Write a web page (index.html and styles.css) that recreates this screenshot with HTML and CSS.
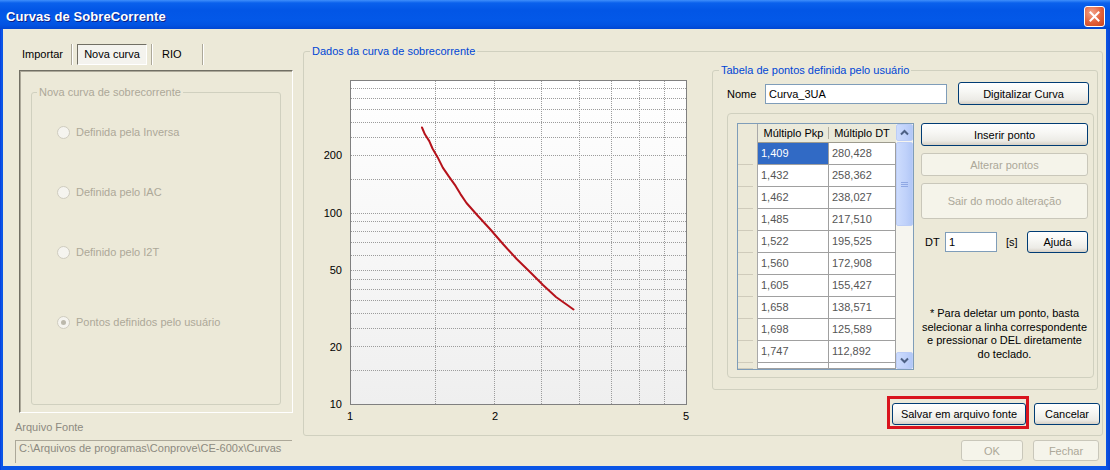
FILE: index.html
```html
<!DOCTYPE html>
<html lang="pt">
<head>
<meta charset="utf-8">
<title>Curvas de SobreCorrente</title>
<link rel="stylesheet" href="styles.css">
</head>
<body>
<div class="window">
  <div class="titlebar">
    <span class="title">Curvas de SobreCorrente</span>
    <span class="close-btn"><svg width="13" height="13" viewBox="0 0 13 13"><path d="M2.5 2.5L10.5 10.5M10.5 2.5L2.5 10.5" stroke="#fff" stroke-width="2" stroke-linecap="square"/></svg></span>
  </div>
  <div class="client">
    <div class="leftcol">
      <div class="tabs">
        <span class="tab t1">Importar</span><span class="tsep"></span>
        <span class="tab t2"><span class="tsel">Nova curva</span></span><span class="tsep"></span>
        <span class="tab t3">RIO</span><span class="tsep"></span>
      </div>
      <div class="tabpanel">
        <fieldset class="grp grp-dis">
          <legend>Nova curva de sobrecorrente</legend>
          <div class="radio r1"><span class="rc"></span>Definida pela Inversa</div>
          <div class="radio r2"><span class="rc"></span>Definida pelo IAC</div>
          <div class="radio r3"><span class="rc"></span>Definido pelo I2T</div>
          <div class="radio r4"><span class="rc on"></span>Pontos definidos pelo usuário</div>
        </fieldset>
      </div>
      <div class="arq-label">Arquivo Fonte</div>
      <div class="arq-path">C:\Arquivos de programas\Conprove\CE-600x\Curvas</div>
    </div>
    <div class="rightcol">
      <fieldset class="grp grp-main">
        <legend>Dados da curva de sobrecorrente</legend>
        <div class="main-inner">
          <svg class="chart" viewBox="310 70 385 355" width="385" height="355">
            <defs>
              <linearGradient id="plotbg" x1="0" y1="0" x2="0" y2="1">
                <stop offset="0" stop-color="#ffffff"/>
                <stop offset="1" stop-color="#efefef"/>
              </linearGradient>
            </defs>
            <rect x="350.5" y="80.5" width="336" height="324" fill="url(#plotbg)"/>
            <g stroke="#9c9c9c" stroke-width="1" stroke-dasharray="1 1" fill="none">
              <path d="M351 88.5H686M351 98.5H686M351 109.5H686M351 122.5H686M351 137.5H686M351 155.5H686M351 179.5H686M351 213.5H686M351 221.5H686M351 231.5H686M351 242.5H686M351 255.5H686M351 270.5H686M351 279.5H686M351 289.5H686M351 300.5H686M351 313.5H686M351 328.5H686M351 346.5H686M351 370.5H686"/>
              <path d="M435.5 81V404M494.5 81V404M541.5 81V404M579.5 81V404M611.5 81V404M639.5 81V404M664.5 81V404"/>
            </g>
            <rect x="350.5" y="80.5" width="336" height="324" fill="none" stroke="#808080"/>
            <polyline fill="none" stroke="#b5121b" stroke-width="2" stroke-linejoin="round" stroke-linecap="round"
              points="422,127.5 424.9,134.3 429.3,141.1 432.5,148.5 437.7,157.4 442.8,167.6 448.8,176.4 455.6,185.9 460.5,194.1 466.5,203 478,216 490,229 503,244 516.7,259 530,272 543,285 556,297 563,302 568,305.5 573.5,309.5"/>
            <g class="axis" text-anchor="end">
              <text x="342" y="159">200</text>
              <text x="342" y="217">100</text>
              <text x="342" y="274">50</text>
              <text x="342" y="351">20</text>
              <text x="342" y="408">10</text>
            </g>
            <g class="axis" text-anchor="middle">
              <text x="350" y="420">1</text>
              <text x="495" y="420">2</text>
              <text x="686" y="420">5</text>
            </g>
          </svg>
          <div class="tablecol">
            <fieldset class="grp grp-table">
              <legend>Tabela de pontos definida pelo usuário</legend>
              <div class="nome-row">
                <span class="nome-lbl">Nome</span>
                <span class="input nome-in">Curva_3UA</span>
                <span class="btn digit-btn">Digitalizar Curva</span>
              </div>
              <div class="inner-panel">
                <div class="grid">
                  <div class="gdata">
                    <div class="grow ghead"><span class="rh"></span><span class="c1">Múltiplo Pkp</span><span class="c2">Múltiplo DT</span></div>
                    <div class="grow"><span class="rh"></span><span class="c1 sel">1,409</span><span class="c2">280,428</span></div>
                    <div class="grow"><span class="rh"></span><span class="c1">1,432</span><span class="c2">258,362</span></div>
                    <div class="grow"><span class="rh"></span><span class="c1">1,462</span><span class="c2">238,027</span></div>
                    <div class="grow"><span class="rh"></span><span class="c1">1,485</span><span class="c2">217,510</span></div>
                    <div class="grow"><span class="rh"></span><span class="c1">1,522</span><span class="c2">195,525</span></div>
                    <div class="grow"><span class="rh"></span><span class="c1">1,560</span><span class="c2">172,908</span></div>
                    <div class="grow"><span class="rh"></span><span class="c1">1,605</span><span class="c2">155,427</span></div>
                    <div class="grow"><span class="rh"></span><span class="c1">1,658</span><span class="c2">138,571</span></div>
                    <div class="grow"><span class="rh"></span><span class="c1">1,698</span><span class="c2">125,589</span></div>
                    <div class="grow"><span class="rh"></span><span class="c1">1,747</span><span class="c2">112,892</span></div>
                    <div class="grow part"><span class="rh"></span><span class="c1"></span><span class="c2"></span></div>
                  </div>
                  <div class="vscroll">
                    <span class="sb-btn"><svg width="9" height="7" viewBox="0 0 9 7"><path d="M1 5.5L4.5 2L8 5.5" fill="none" stroke="#4d6185" stroke-width="2"/></svg></span>
                    <span class="sb-thumb"><svg width="7" height="7" viewBox="0 0 7 7"><path d="M0 1.5H7M0 3.5H7M0 5.5H7" stroke="#8fa8e4" stroke-width="1"/></svg></span>
                    <span class="sb-fill"></span>
                    <span class="sb-btn"><svg width="9" height="7" viewBox="0 0 9 7"><path d="M1 1.5L4.5 5L8 1.5" fill="none" stroke="#4d6185" stroke-width="2"/></svg></span>
                  </div>
                </div>
                <div class="btncol">
                  <span class="btn b-ins">Inserir ponto</span>
                  <span class="btn dis b-alt">Alterar pontos</span>
                  <span class="btn dis b-sair">Sair do modo alteração</span>
                  <div class="dt-row">
                    <span class="dt-lbl">DT</span>
                    <span class="input dt-in">1</span>
                    <span class="dt-unit">[s]</span>
                    <span class="btn b-ajuda">Ajuda</span>
                  </div>
                  <div class="note">* Para deletar um ponto, basta<br>selecionar a linha correspondente<br>e pressionar o DEL diretamente<br>do teclado.</div>
                </div>
              </div>
            </fieldset>
            <div class="save-row">
              <span class="redbox"><span class="btn b-salvar">Salvar em arquivo fonte</span></span>
              <span class="btn b-cancel">Cancelar</span>
            </div>
          </div>
        </div>
      </fieldset>
      <div class="bottom-row">
        <span class="btn dis b-ok">OK</span>
        <span class="btn dis b-fechar">Fechar</span>
      </div>
    </div>
  </div>
</div>
</body>
</html>
```
FILE: styles.css
```css
* { box-sizing: border-box; }
body {
  margin: 0;
  background: #ffffff;
  font-family: "Liberation Sans", Arial, sans-serif;
  font-size: 11px;
  color: #000;
}
.window {
  width: 1110px;
  height: 470px;
  background: linear-gradient(90deg, #0831d9 0, #0a55e6 1px, #0a55e6 1106px, #0843d2 1110px);
  display: flex;
  flex-direction: column;
  overflow: hidden;
}
.titlebar {
  height: 29px;
  flex: none;
  display: flex;
  align-items: center;
  padding: 0 5px 0 6px;
  background: linear-gradient(#3f8ffb 0, #0a61ec 3px, #0256e6 10px, #0358e8 20px, #0253e2 25px, #0146d2 29px);
}
.title {
  flex: 1;
  color: #fff;
  font-weight: bold;
  font-size: 13px;
  padding-top: 3px;
  text-shadow: 1px 1px 0 #0c1f86;
  letter-spacing: 0.1px;
}
.close-btn {
  width: 21px;
  height: 21px;
  margin-top: 3px;
  border: 1px solid #fff;
  border-radius: 3px;
  background: radial-gradient(circle at 35% 30%, #f3a48a 0, #e2603a 55%, #c9431d 100%);
  display: flex;
  align-items: center;
  justify-content: center;
}
.client {
  flex: 1;
  margin: 0 4px 4px 3px;
  background: #ece9d8;
  display: flex;
  padding-left: 11px;
}

/* left column */
.leftcol { width: 278px; flex: none; display: flex; flex-direction: column; }
.tabs { margin-top: 14px; height: 22px; display: flex; align-items: center; }
.tab { height: 21px; line-height: 21px; }
.t1 { width: 57px; text-align: center; }
.t2 { width: 78px; padding: 0 4px; }
.tsel {
  display: block;
  height: 21px;
  line-height: 19px;
  text-align: center;
  background: #f4f3ee;
  border-top: 1px solid #716f64;
  border-left: 1px solid #716f64;
  border-right: 1px solid #ffffff;
  border-bottom: 1px solid #ffffff;
}
.t3 { width: 49px; padding-left: 9px; }
.tsep { width: 2px; height: 21px; border-left: 1px solid #aca899; border-right: 1px solid #ffffff; }
.tabpanel {
  margin-top: 5px;
  margin-left: 5px;
  width: 274px;
  height: 343px;
  border-top: 1px solid #716f64;
  border-left: 1px solid #716f64;
  border-right: 1px solid #ffffff;
  border-bottom: 1px solid #ffffff;
  box-shadow: inset 1px 1px 0 #aca899;
  padding: 1px 0 0 1px;
}
.grp {
  margin: 0;
  padding: 0;
  min-width: 0;
  border: 1px solid #d0d0bf;
  border-radius: 3px;
}
.grp legend {
  line-height: 14px;
  height: 14px;
  padding: 0 2px;
  color: #0046d5;
}
.grp-dis {
  margin-top: 13px;
  margin-left: 10px;
  width: 250px;
  height: 320px;
}
.grp-dis legend { color: #aca899; margin-left: 5px; }
.radio {
  height: 16px;
  display: flex;
  align-items: center;
  padding-left: 25px;
  color: #aca899;
}
.r1 { margin-top: 25px; }
.r2, .r3 { margin-top: 44px; }
.r4 { margin-top: 54px; }
.rc {
  width: 13px;
  height: 13px;
  border-radius: 50%;
  border: 1px solid #cfccbf;
  background: #f5f4ef;
  margin-right: 6px;
  display: flex;
  align-items: center;
  justify-content: center;
}
.rc.on::after {
  content: "";
  width: 5px;
  height: 5px;
  border-radius: 50%;
  background: #bcb9ac;
}
.arq-label { margin-top: 8px; margin-left: 1px; line-height: 13px; color: #8c8a80; }
.arq-path {
  margin-top: 6px;
  margin-left: 1px;
  width: 277px;
  height: 23px;
  border-top: 1px solid #aca899;
  border-left: 1px solid #aca899;
  padding: 1px 0 0 3px;
  line-height: 13px;
  color: #8c8a80;
  white-space: nowrap;
  overflow: hidden;
}

/* right column */
.rightcol { width: 800px; flex: none; margin-left: 11px; display: flex; flex-direction: column; }
.grp-main { margin-top: 15px; width: 800px; height: 392px; }
.grp-main legend { margin-left: 6px; }
.main-inner { display: flex; }
.chart { display: block; margin-top: 12px; margin-left: 6px; flex: none; }
.axis text { font-family: "Liberation Sans", Arial, sans-serif; font-size: 11px; fill: #000; }
.tablecol { width: 388px; margin-left: 17px; flex: none; }
.grp-table { margin-top: 5px; width: 386px; height: 327px; }
.grp-table legend { margin-left: 6px; }
.nome-row { margin-top: 5px; height: 23px; display: flex; align-items: center; padding-left: 14px; }
.nome-lbl { width: 38px; }
.input {
  background: #fff;
  border: 1px solid #7f9db9;
  height: 20px;
  line-height: 18px;
  padding-left: 3px;
}
.nome-in { width: 182px; }
.btn {
  display: flex;
  align-items: center;
  justify-content: center;
  border: 1px solid #003c74;
  border-radius: 3px;
  background: linear-gradient(#ffffff 0, #f7f7f4 40%, #ecebe6 80%, #d6d0c5 100%);
  color: #000;
  white-space: nowrap;
}
.btn.dis {
  border-color: #c9c7ba;
  background: #f5f4ea;
  color: #aca899;
}
.digit-btn { margin-left: 11px; width: 131px; height: 23px; }
.inner-panel {
  margin-top: 8px;
  margin-left: 14px;
  width: 367px;
  height: 265px;
  border: 1px solid #d0d0bf;
  border-radius: 4px;
  display: flex;
  padding: 9px 0 0 9px;
}
.grid {
  width: 177px;
  height: 247px;
  border: 1px solid #7f9db9;
  display: flex;
  background: #fff;
  flex: none;
}
.gdata { width: 158px; overflow: hidden; }
.grow { display: flex; height: 22px; }
.grow .rh {
  width: 20px;
  border-right: 1px solid #a9a9a9;
  background: linear-gradient(#cfcbbb, #cfcbbb) no-repeat left bottom / 15px 1px, #ece9d8;
}
.c1, .c2 {
  border-right: 1px solid #a0a0a0;
  border-bottom: 1px solid #a0a0a0;
  padding-left: 3px;
  line-height: 21px;
  color: #555;
}
.c1 { width: 71px; }
.c2 { width: 67px; }
.c1.sel { background: #316ac5; color: #fff; }
.ghead { height: 19px; }
.ghead .rh { background: #ece9d8; }
.ghead .c1, .ghead .c2 {
  background: #ebeadb;
  color: #000;
  text-align: center;
  padding-left: 0;
  line-height: 18px;
  border-bottom-color: #9d9b8e;
}
.ghead .c1 { border-right: none; width: 71px; background: linear-gradient(#b3b0a3, #b3b0a3) no-repeat right 3px / 1px 12px, #ebeadb; }
.ghead .c2 { border-right-color: #ebeadb; }
.part { height: 6px; }
.vscroll { width: 17px; display: flex; flex-direction: column; background: #f6f5ef; }
.sb-btn, .sb-thumb {
  border: 1px solid #bccdf6;
  border-radius: 2px;
  background: linear-gradient(90deg, #cddcfd 0, #bfd1fa 60%, #b2c7f6 100%);
  display: flex;
  align-items: center;
  justify-content: center;
}
.sb-btn { height: 17px; }
.sb-thumb { height: 84px; margin-top: 1px; }
.sb-fill { flex: 1; }
.btncol { margin-left: 7px; width: 167px; display: flex; flex-direction: column; flex: none; }
.b-ins { height: 23px; }
.b-alt { margin-top: 7px; height: 23px; }
.b-sair { margin-top: 7px; height: 36px; }
.dt-row { margin-top: 12px; height: 22px; display: flex; align-items: center; padding-left: 4px; }
.dt-lbl { width: 20px; }
.dt-in { width: 52px; }
.dt-unit { margin-left: 9px; }
.b-ajuda { margin-left: auto; width: 61px; height: 22px; }
.note { margin-top: 54px; text-align: center; line-height: 13.5px; }
.save-row { margin-top: 6px; display: flex; align-items: flex-start; justify-content: flex-end; }
.redbox {
  width: 142px;
  height: 33px;
  border: 3px solid #d9141d;
  padding: 4px 1px 0 1px;
}
.b-salvar { width: 134px; height: 22px; margin-left: 1px; }
.b-cancel { margin-left: 5px; margin-top: 7px; width: 66px; height: 22px; }
.bottom-row { margin-top: 4px; display: flex; justify-content: flex-end; padding-right: 4px; }
.b-ok { width: 62px; height: 21px; }
.b-fechar { margin-left: 10px; width: 66px; height: 21px; }
```
